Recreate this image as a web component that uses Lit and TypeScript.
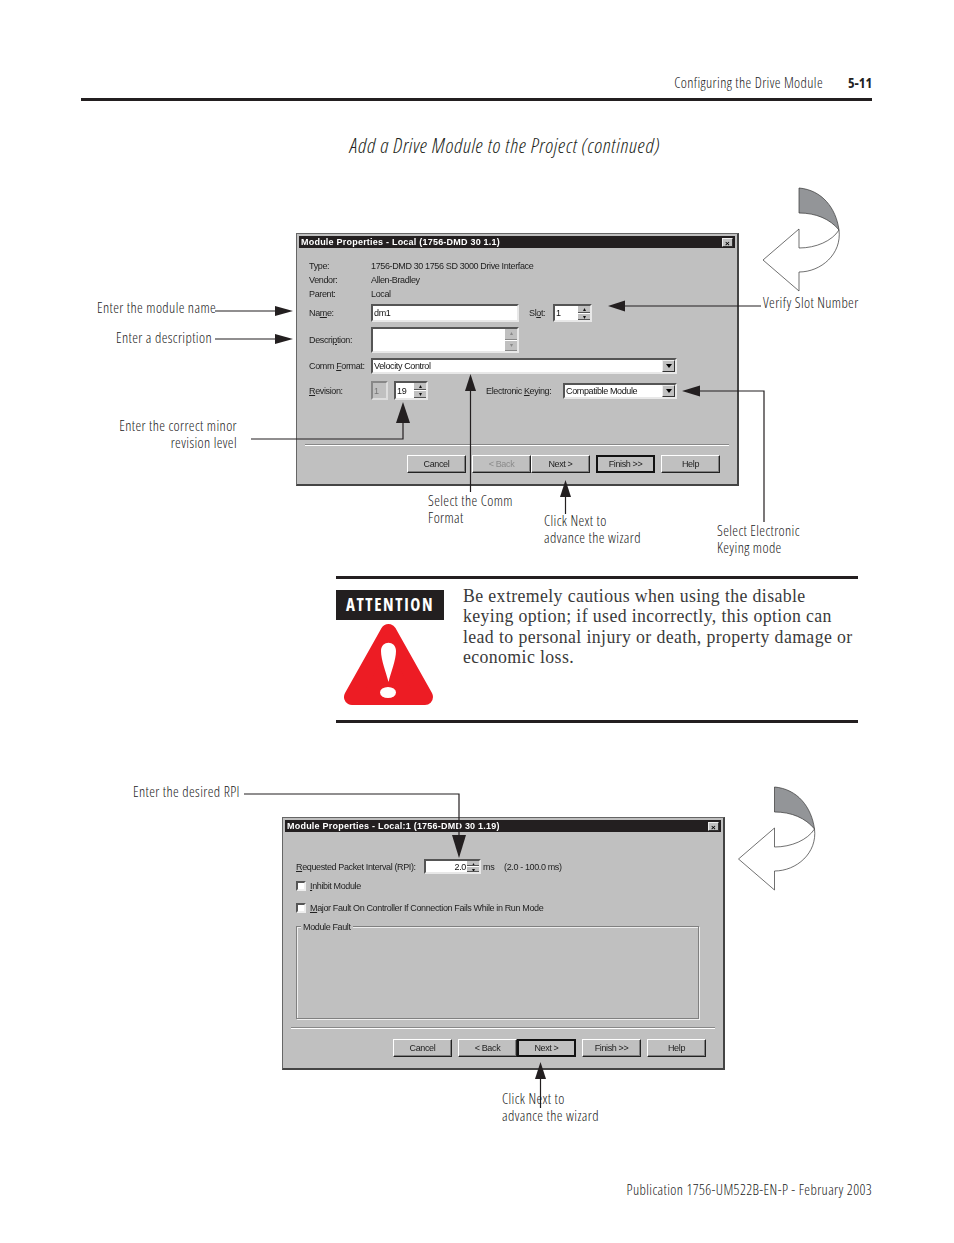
import { LitElement, html, css, svg } from "lit";
import { customElement } from "lit/decorators.js";

const LABELS = [
  { x: 97, y: 299, t: ["Enter the module name"] },
  { x: 116, y: 329, t: ["Enter a description"] },
  { x: 37, y: 417, w: 200, right: true, t: ["Enter the correct minor", "revision level"] },
  { x: 763, y: 294, t: ["Verify Slot Number"] },
  { x: 428, y: 492, t: ["Select the Comm", "Format"] },
  { x: 544, y: 512, t: ["Click Next to", "advance the wizard"] },
  { x: 717, y: 522, t: ["Select Electronic", "Keying mode"] },
  { x: 133, y: 783, t: ["Enter the desired RPI"] },
  { x: 502, y: 1090, t: ["Click Next to", "advance the wizard"] },
];

const curved = (dx: number, dy: number) => svg`
  <g transform="translate(${dx} ${dy})" stroke="#333" stroke-width=".7">
    <path d="M799 188C822 190 836 208 839 230C830 219 816 213 799 213Z" fill="#939598"/>
    <path d="M839 230C832 241 816 248 799 248V229L763 260L799 291V272C821 272 842 254 839 230" fill="#fff"/>
  </g>`;

const arrows = svg`
  <path d="M215 311H277M215 339H277M251 439H403V420M470.500 391V492M625 306H761M700 391H764V522M565.500 497V514M244 794H459V836M540.500 1079V1108" fill="none" stroke="#231f20" stroke-width="1.200"/>
  <g fill="#231f20">
    <path d="M293 311L275 306V316Z"/><path d="M293 339L275 334V344Z"/>
    <path d="M403 402L396 423H410Z"/><path d="M470.500 374L465 391H476Z"/>
    <path d="M608 306L625 300.500V311.500Z"/><path d="M682 391L700 385.500V396.500Z"/>
    <path d="M565.500 480L560 497H571Z"/><path d="M459 858L452 835H466Z"/>
    <path d="M540.500 1062L535 1079H546Z"/>
  </g>
  ${curved(0, 0)}${curved(-24.5, 599)}
`;

const spin = (c = "") => html`<span class="spin ${c}"><i>▴</i><i>▾</i></span>`;
const combo = () => html`<span class="drop"><b></b></span>`;
const btn = (t: string, c = "") => html`<span class="btn ${c}">${t}</span>`;

@customElement("app-root")
export class AppRoot extends LitElement {
  static styles = css`
    :host { display: block; }
    .page { position: relative; width: 954px; height: 1243px; background: #fff; color: #231f20; overflow: hidden;
      font-family: "Open Sans", "Liberation Sans", sans-serif; font-stretch: 75%; font-weight: 300; font-size: 14.500px; letter-spacing: .38px; }
    .head { margin: 0 82px 0 81px; height: 101px; box-sizing: border-box; border-bottom: 3px solid #231f20;
      display: flex; justify-content: flex-end; gap: 25px; padding-top: 74px; line-height: 18px; color: #222; }
    .head b { font-weight: 700; letter-spacing: 0; font-size: 14px; }
    .title { height: 79px; margin-left: 350px; padding-top: 34px; box-sizing: border-box; font-style: italic; font-size: 21px; letter-spacing: .64px; line-height: 20px; }
    .fig { height: 396px; box-sizing: border-box; padding-top: 53px; }
    .fig .dlg { margin-left: 296px; }
    .fig2 { height: 334px; padding-top: 94px; }
    .fig2 .dlg { margin-left: 282px; }

    .dlg { position: relative; width: 443px; height: 253px; box-sizing: border-box; background: #c0c0c0; padding: 3px 2px;
      border: 1px solid #666; border-right: 2px solid #444; border-bottom: 2px solid #444; filter: blur(.3px);
      font-family: "Liberation Sans", sans-serif; font-stretch: normal; font-weight: 400; font-size: 9px; color: #222; letter-spacing: -.37px; white-space: nowrap; display: flex; flex-direction: column; }
    .bar { height: 12px; margin: -1px 0 0; background: #231f20; color: #fff; font-weight: 700; display: flex; align-items: center; justify-content: space-between; padding: 0 2px 1px; box-sizing: border-box; letter-spacing: .22px; flex: none; }
    .x { width: 11px; height: 9px; background: #c0c0c0; color: #000; font-size: 8px; line-height: 9px; text-align: center; border: 1px solid #eee; border-color: #eee #333 #333 #eee; box-sizing: border-box; margin-top: 1px; }
    .info { display: grid; grid-template-columns: 62px auto; grid-auto-rows: 14px; align-items: center; margin: 11px 0 0 10px; }
    .row { display: flex; align-items: center; margin-left: 10px; }
    .lab { width: 62px; flex: none; }
    .field { position: relative; box-sizing: border-box; background: #fff; border: 2px solid; border-color: #555 #e8e8e8 #e8e8e8 #555; padding-left: 1px; display: flex; align-items: center; color: #111; flex: none; }
    .n1 { margin-top: 3px; height: 18px; }
    .n2 { margin-top: 5px; height: 26px; }
    .n3 { margin-top: 5px; height: 16px; }
    .n4 { margin-top: 7px; height: 19px; }
    .w148 { width: 148px; height: 18px; }
    .w148b { width: 148px; height: 26px; }
    .w39 { width: 39px; height: 18px; margin-left: 0; }
    .w306 { width: 306px; height: 16px; }
    .dis { width: 17px; height: 19px; background: #c0c0c0; color: #777; border-color: #888 #ddd #ddd #888; }
    .w34 { width: 34px; height: 19px; margin-left: 6px; }
    .w114 { width: 114px; height: 16px; }
    .slot { margin-left: 10px; width: 24px; }
    .key { margin-left: 58px; width: 77px; }
    .spin { position: absolute; right: 0; top: 0; bottom: 0; width: 12px; display: flex; flex-direction: column; gap: 1px; background: #fff; }
    .spin i { flex: 1; background: #c0c0c0; font-style: normal; font-size: 6px; line-height: 6px; text-align: center; border-bottom: 1px solid #555; overflow: hidden; }
    .spin.dim i { color: #8a8a8a; border-bottom-color: #888; line-height: 9px; }
    .drop { position: absolute; right: 0; top: 0; bottom: 0; width: 13px; background: #c0c0c0; border: 1px solid; border-color: #eee #333 #333 #eee; box-sizing: border-box; display: flex; align-items: center; justify-content: center; }
    .drop b { width: 0; height: 0; border: 3px solid transparent; border-top: 4px solid #000; border-bottom: 0; }
    .sep { margin: 0 6px; border-top: 1px solid #888; border-bottom: 1px solid #fff; flex: none; }
    .btns { display: flex; flex: none; }
    .btn { box-sizing: border-box; width: 59px; height: 18px; display: flex; align-items: center; justify-content: center; background: #c0c0c0; border: 1px solid; border-color: #fff #222 #222 #fff; box-shadow: inset -1px -1px 0 #808080; }
    .g6 { margin-left: 6px; }
    .off { color: #8a8a8a; }
    .def { border: 2px solid #111; box-shadow: none; }
    .sep1 { margin-top: 44px; }
    .btns1 { margin: 9px 0 0 108px; }
    .rpi { margin: 27px 0 0 11px; height: 15px; display: flex; align-items: center; }
    .rpi .lab { width: 128px; }
    .rpi .field { width: 57px; height: 15px; justify-content: flex-end; padding-right: 13px; }
    .rpi .ms { margin: 0 0 0 2px; width: 21px; }
    .check { display: flex; align-items: center; gap: 4px; margin-left: 11px; height: 10px; }
    .check i { width: 10px; height: 10px; box-sizing: border-box; background: #fff; border: 2px solid; border-color: #555 #eee #eee #555; }
    .c1 { margin-top: 7px; }
    .c2 { margin-top: 12px; }
    .group { position: relative; margin: 13px 0 0 11px; width: 403px; height: 93px; box-sizing: border-box; border: 1px solid #808080; box-shadow: 1px 1px 0 #eee, inset 1px 1px 0 #eee; flex: none; }
    .group span { position: absolute; left: 4px; top: -5px; background: #c0c0c0; padding: 0 2px; }
    .sep2 { margin-top: 8px; }
    .btns2 { margin: 10px 0 0 108px; }

    .att { margin: 0 96px 0 336px; height: 147px; box-sizing: border-box; border-top: 3px solid #231f20; border-bottom: 3px solid #231f20; display: flex; gap: 19px; padding-top: 11px; }
    .att .side { width: 108px; flex: none; }
    .tag { height: 30px; background: #231f20; color: #fff; font: 700 17px/29px "Open Sans", sans-serif; font-stretch: 75%; letter-spacing: 1.6px; text-align: center; }
    .tri { display: block; margin-top: 3px; }
    .msg { font: 17.800px/20.350px "Liberation Serif", serif; color: #3a3a3a; letter-spacing: .38px; margin-top: -4px; white-space: nowrap; }
    .foot { margin: 0 82px 0 0; padding-top: 124px; text-align: right; color: #222; line-height: 18px; }

    .over { position: absolute; inset: 0; pointer-events: none; }
    .over svg { position: absolute; left: 0; top: 0; }
    .lbl { position: absolute; line-height: 17px; color: #222; white-space: nowrap; }
    .lbl.r { text-align: right; }
  `;

  render() {
    return html`<div class="page">
      <div class="head"><span>Configuring the Drive Module</span><b>5-11</b></div>
      <div class="title">Add a Drive Module to the Project (continued)</div>

      <div class="fig"><div class="dlg">
        <div class="bar">Module Properties - Local (1756-DMD 30 1.1)<span class="x">×</span></div>
        <div class="info">
          <span>Type:</span><span>1756-DMD 30 1756 SD 3000 Drive Interface</span>
          <span>Vendor:</span><span>Allen-Bradley</span>
          <span>Parent:</span><span>Local</span>
        </div>
        <div class="row n1"><span class="lab">Na<u>m</u>e:</span><span class="field w148">dm1</span><span class="slot">Sl<u>o</u>t:</span><span class="field w39">1${spin()}</span></div>
        <div class="row n2"><span class="lab">Descri<u>p</u>tion:</span><span class="field w148b">${spin("dim")}</span></div>
        <div class="row n3"><span class="lab">Comm <u>F</u>ormat:</span><span class="field w306">Velocity Control${combo()}</span></div>
        <div class="row n4"><span class="lab"><u>R</u>evision:</span><span class="field dis">1</span><span class="field w34">19${spin()}</span><span class="key">Electronic <u>K</u>eying:</span><span class="field w114">Compatible Module${combo()}</span></div>
        <div class="sep sep1"></div>
        <div class="btns btns1">${btn("Cancel")}<span class="g6"></span>${btn("< Back", "off")}${btn("Next >")}<span class="g6"></span>${btn("Finish >>", "def")}<span class="g6"></span>${btn("Help")}</div>
      </div></div>

      <div class="att">
        <div class="side"><div class="tag">ATTENTION</div>
          <svg class="tri" width="108" height="84" viewBox="336 623 108 84">
            <path d="M388.500 632L352 697H425Z" fill="#ed1c24" stroke="#ed1c24" stroke-width="16" stroke-linejoin="round"/>
            <path d="M381 651C381 640 396 640 396 651C396 660 391 672 388.500 682C386 672 381 660 381 651Z" fill="#fff"/>
            <ellipse cx="388" cy="692.500" rx="8" ry="5.500" fill="#fff"/>
          </svg>
        </div>
        <div class="msg">Be extremely cautious when using the disable<br>keying option; if used incorrectly, this option can<br>lead to personal injury or death, property damage or<br>economic loss.</div>
      </div>

      <div class="fig fig2"><div class="dlg">
        <div class="bar">Module Properties - Local:1 (1756-DMD 30 1.19)<span class="x">×</span></div>
        <div class="rpi"><span class="lab"><u>R</u>equested Packet Interval (RPI):</span><span class="field">2.0${spin()}</span><span class="ms">ms</span><span>(2.0 - 100.0 ms)</span></div>
        <div class="check c1"><i></i><span><u>I</u>nhibit Module</span></div>
        <div class="check c2"><i></i><span><u>M</u>ajor Fault On Controller If Connection Fails While in Run Mode</span></div>
        <div class="group"><span>Module Fault</span></div>
        <div class="sep sep2"></div>
        <div class="btns btns2">${btn("Cancel")}<span class="g6"></span>${btn("< Back")}${btn("Next >", "def")}<span class="g6"></span>${btn("Finish >>")}<span class="g6"></span>${btn("Help")}</div>
      </div></div>

      <div class="foot">Publication 1756-UM522B-EN-P - February 2003</div>

      <div class="over">
        <svg width="954" height="1243" viewBox="0 0 954 1243">${arrows}</svg>
        ${LABELS.map((l) => html`<div class="lbl ${l.right ? "r" : ""}" style="left:${l.x}px;top:${l.y}px;${l.w ? `width:${l.w}px` : ""}">${l.t.map((s) => html`<div>${s}</div>`)}</div>`)}
      </div>
    </div>`;
  }
}
